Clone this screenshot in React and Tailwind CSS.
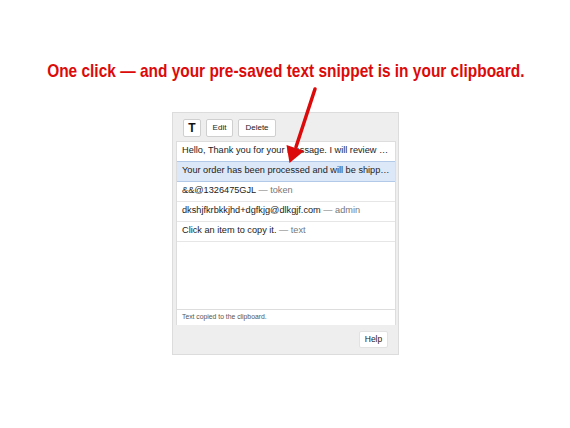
import React from "react";

const rows = [
  { main: "Hello, Thank you for your message. I will review your request and get back to you shortly.", tag: null },
  { main: "Your order has been processed and will be shipped within two business days.", tag: null, active: true },
  { main: "&&@1326475GJL", tag: "token" },
  { main: "dkshjfkrbkkjhd+dgfkjg@dlkgjf.com", tag: "admin" },
  { main: "Click an item to copy it.", tag: "text" },
];

export default function App() {
  return (
    <div
      className="relative w-[570px] h-[428px] bg-white flex flex-col items-center overflow-hidden"
      style={{ fontFamily: '"Liberation Sans", Arial, sans-serif' }}
    >
      <h1 className="mt-[62px] text-[18.5px] leading-none font-bold text-[#dc0a0a] whitespace-nowrap scale-x-[0.835] ml-[2px]">
        One click — and your pre-saved text snippet is in your clipboard.
      </h1>

      <div className="mt-[31px] ml-[1px] w-[227px] h-[243px] border border-[#dcdcdc] bg-[#eeeeee] flex flex-col">
        <div className="h-[28px] flex items-start gap-[5px] pl-[10px] pt-[6px]">
          <button className="w-[18px] h-[18px] bg-white border border-[#cfcfcf] rounded-[2px] flex items-center justify-center text-[12px] font-semibold text-[#111] leading-none">
            T
          </button>
          <button className="w-[27px] h-[18px] bg-white border border-[#cfcfcf] rounded-[2px] flex items-center justify-center text-[8px] text-[#222] leading-none">
            Edit
          </button>
          <button className="w-[38px] h-[18px] bg-white border border-[#cfcfcf] rounded-[2px] flex items-center justify-center text-[8px] text-[#222] leading-none">
            Delete
          </button>
        </div>

        <div className="ml-[3px] mr-[2px] h-[184px] bg-white border border-[#dddddd] border-b-0 flex flex-col">
          <div className="flex-1 flex flex-col">
            {rows.map((r, i) => (
              <div
                key={i}
                className={
                  r.active
                    ? "h-[21px] -mt-px border-t border-b border-[#b3c9e8] bg-[#dce7f7] flex items-center pl-[5px] pr-[4px] text-[9.2px] text-[#222] whitespace-nowrap overflow-hidden"
                    : "h-[20px] border-b border-[#e6e6e6] flex items-center pl-[5px] pr-[4px] text-[9.2px] text-[#222] whitespace-nowrap overflow-hidden"
                }
              >
                <span className="block w-full overflow-hidden text-ellipsis">
                  {r.main}
                  {r.tag && <span className="text-[#777]"> — {r.tag}</span>}
                </span>
              </div>
            ))}
          </div>
          <div className="h-[16px] border-t border-[#dddddd] flex items-center pl-[5px] text-[6.8px] text-[#555] leading-none">
            Text copied to the clipboard.
          </div>
        </div>

        <div className="flex-1 flex justify-end items-start pt-[6px] pr-[10px]">
          <button className="w-[29px] h-[17px] bg-white border border-[#e2e2e2] rounded-[2px] flex items-center justify-center text-[8.5px] text-[#222] leading-none">
            Help
          </button>
        </div>
      </div>

      <svg className="absolute left-0 top-0 pointer-events-none" width="570" height="428" viewBox="0 0 570 428">
        <line x1="315" y1="89" x2="296" y2="147" stroke="#dc0a0a" strokeWidth="3.5" strokeLinecap="round" />
        <polygon points="286.5,145 304,151 289.5,163" fill="#dc0a0a" />
      </svg>
    </div>
  );
}
